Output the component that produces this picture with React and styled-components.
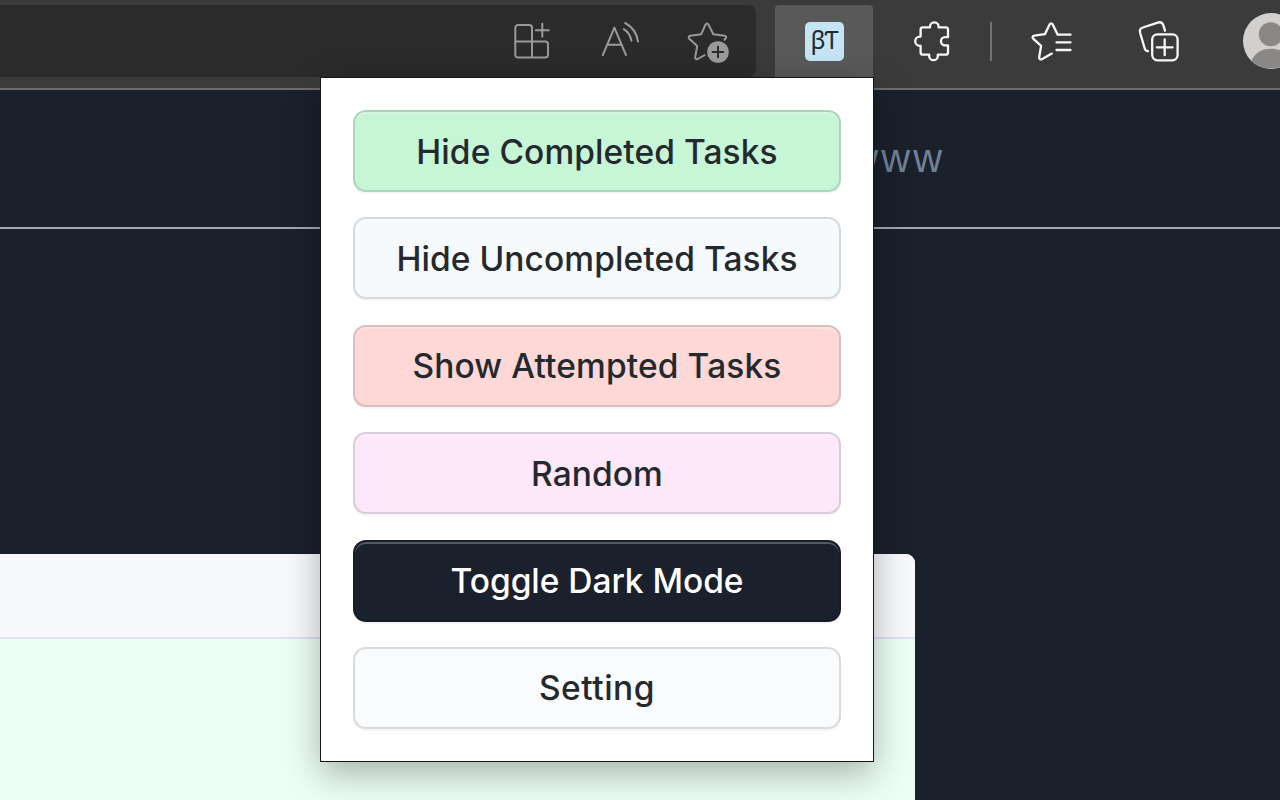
import React from 'react';
import styled, { createGlobalStyle } from 'styled-components';

const GlobalStyle = createGlobalStyle`
  * { box-sizing: border-box; }
  body { margin: 0; background: #1a202c; font-family: Inter, "Liberation Sans", sans-serif; }
`;

const Screen = styled.div`
  position: relative;
  width: 1280px;
  height: 800px;
  overflow: hidden;
  display: flex;
  flex-direction: column;
  background: #1a202c;
`;

const Toolbar = styled.div`
  flex: none;
  display: flex;
  align-items: flex-start;
  height: 90px;
  padding-top: 5px;
  background: #3b3b3b;
  border-bottom: 2px solid #6f6e6d;
`;

const AddressBar = styled.div`
  flex: none;
  display: flex;
  align-items: center;
  justify-content: flex-end;
  gap: 40px;
  width: 756px;
  height: 72px;
  padding-right: 25px;
  border-radius: 0 8px 8px 0;
  background: #2b2b2b;
`;

const ExtensionButton = styled.div`
  flex: none;
  display: flex;
  align-items: center;
  justify-content: center;
  width: 98px;
  height: 72px;
  margin-left: 19px;
  border-radius: 4px 4px 0 0;
  background: #595959;
`;

const ExtensionLogo = styled.div`
  display: flex;
  align-items: flex-start;
  justify-content: center;
  width: 39px;
  height: 39px;
  border-radius: 5px;
  background: #c5e4f4;
  color: #1f2930;
  font: 400 24.5px/36px "Noto Sans", sans-serif;
  letter-spacing: -1.1px;
`;

const Actions = styled.div`
  flex: none;
  display: flex;
  align-items: center;
  height: 72px;
  padding-left: 35px;
`;

const Divider = styled.div`
  width: 2px;
  height: 39px;
  margin: 0 37px 0 34px;
  background: #737373;
`;

const Icon = styled.svg`
  flex: none;
  display: block;
  width: 48px;
  height: 48px;
  fill: none;
  stroke: ${(p) => (p.$muted ? '#9a9a9a' : '#f8f8f8')};
  stroke-width: ${(p) => (p.$muted ? 2 : 2.3)};
  stroke-linecap: round;
  stroke-linejoin: round;
`;

const CollectionsIcon = styled(Icon)`
  margin-left: 59px;
`;

const Avatar = styled.svg`
  flex: none;
  width: 56px;
  height: 56px;
  margin-left: 59px;
`;

const PageHeader = styled.div`
  flex: none;
  display: flex;
  align-items: center;
  justify-content: flex-end;
  height: 139px;
  padding: 0 334.7px 2px 0;
  border-bottom: 2px solid #a0a6b4;
  color: #718096;
  font-family: "Liberation Sans", Arial, sans-serif;
  font-size: 40px;
  line-height: 48px;
  letter-spacing: 3.1px;
`;

const PageBody = styled.div`
  flex: 1;
  padding-top: 325px;
`;

const TaskTable = styled.div`
  width: 914.5px;
  height: 246px;
  border-top-right-radius: 9px;
  overflow: hidden;
  background: #edfff4;
`;

const TableHead = styled.div`
  height: 85px;
  background: #f7f9fc;
  border-bottom: 2px solid #e2e0f5;
`;

const Popup = styled.div`
  position: absolute;
  left: 320px;
  top: 77px;
  width: 554px;
  height: 685px;
  display: flex;
  flex-direction: column;
  gap: 25.4px;
  padding: 32px;
  background: #fff;
  border: 1px solid #161616;
  box-shadow: 0 12px 34px rgba(0, 0, 0, 0.3);
`;

const MenuButton = styled.button`
  flex: none;
  width: 488px;
  height: 82px;
  padding: 1px 0 0;
  border: 2px solid ${(p) => p.$edge || 'rgba(27, 31, 35, 0.15)'};
  border-radius: 13px;
  background: ${(p) => p.$fill};
  color: ${(p) => p.$ink || '#24292e'};
  box-shadow: 0 2px 0 rgba(27, 31, 35, 0.04),
    inset 0 2px 0 rgba(255, 255, 255, 0.25);
  font: 500 33.5px/48px Inter, sans-serif;
  letter-spacing: ${(p) => p.$track || '0.08px'};
`;

const buttons = [
  { label: 'Hide Completed Tasks', fill: '#c6f6d5' },
  { label: 'Hide Uncompleted Tasks', fill: '#f7fafc' },
  { label: 'Show Attempted Tasks', fill: '#fed7d7', track: '0.12px' },
  { label: 'Random', fill: '#fde8fa' },
  { label: 'Toggle Dark Mode', fill: '#1a202c', ink: '#fff', edge: '#171c26', track: '-0.04px' },
  { label: 'Setting', fill: '#fafbfc', track: '0.5px' },
];

export default function App() {
  return (
    <Screen>
      <GlobalStyle />
      <Toolbar>
        <AddressBar>
          <Icon $muted viewBox="507 17 48 48">
            <path d="M518 25h11.5a2.5 2.5 0 0 1 2.5 2.5v30h-14a2.7 2.7 0 0 1-2.7-2.7v-27a2.7 2.7 0 0 1 2.7-2.8zM515.3 41.4h30a2.7 2.7 0 0 1 2.7 2.7v10.7a2.7 2.7 0 0 1-2.7 2.7H532M542.3 23.8v13M535.8 30.3h13" />
          </Icon>
          <Icon $muted viewBox="595 17 48 48">
            <path d="M602.8 55.2l11.6-27.6L626 55.2M607 44.8h14.8M623.7 29.2c4 2.4 6.8 6.6 7.7 11.6M625.2 23c7.2 3.8 11.7 10.4 12.8 18.6" />
          </Icon>
          <Icon $muted viewBox="683 17 48 48">
            <path d="M724.4 39.8l1.2-1.2c1.1-1.2.6-2.7-1-2.9l-11.3-1.4-4.8-9.7c-.7-1.4-2.3-1.4-3 0l-4.4 9.7-10.7 1.4c-1.7.3-2.3 1.9-1.1 3l7.9 7.2-2 11.2c-.3 1.7 1.2 2.6 2.6 1.9l6.8-3.8" />
            <circle cx="718" cy="52" r="10.8" fill="#9a9a9a" stroke="none" />
            <path d="M718 46.7v10.6M712.7 52h10.6" stroke="#2b2b2b" />
          </Icon>
        </AddressBar>
        <ExtensionButton>
          <ExtensionLogo>βƬ</ExtensionLogo>
        </ExtensionButton>
        <Actions>
          <Icon viewBox="908 17 48 48">
            <path d="M922.8 27.4h7.2v-.7a4.3 4.3 0 0 1 8.6 0v.7h7.2a2.2 2.2 0 0 1 2.2 2.2v7.6h-3a4 4 0 0 0 0 8.1h3v7.2a2.2 2.2 0 0 1-2.2 2.2h-8v1.2a4.3 4.3 0 0 1-8.6 0v-1.2h-6.4a2.2 2.2 0 0 1-2.2-2.2v-6.7h-.8a4.6 4.6 0 0 1 0-9.2h.8v-7a2.2 2.2 0 0 1 2.2-2.2z" />
          </Icon>
          <Divider />
          <Icon viewBox="1029 17 48 48">
            <path d="M1070.5 34.7h-12.8l-5.1-10.4c-.7-1.3-2.2-1.3-2.9 0l-4.7 9.8-10.8 1.6c-1.7.3-2.2 1.9-1 3l7.9 7.2-1.9 11.4c-.3 1.6 1.2 2.6 2.6 1.9l10-5.6M1056.5 42.4h14M1056.5 50h14" />
          </Icon>
          <CollectionsIcon viewBox="1136 17 48 48">
            <path d="M1148 51.2c-1.8-.1-2.8-.9-3.2-2.4l-4.7-16c-.7-2.6.3-4.6 2.8-5.3l14.9-4.9c2.7-.8 4.7.1 5.6 2.7l1.6 5.4" />
            <rect x="1152.2" y="34.4" width="25.4" height="25.9" rx="5.2" />
            <path d="M1164.7 39.5v15.7M1156.8 47.3h15.8" />
          </CollectionsIcon>
          <Avatar viewBox="1243 13 56 56">
            <circle cx="1271" cy="41" r="28" fill="#d2d0ce" />
            <circle cx="1270.8" cy="34.2" r="12" fill="#8a8886" />
            <path d="M1251.5 61C1254 53 1262 48.7 1271 48.7S1288 53 1290.5 61C1280 71 1262 71 1251.5 61z" fill="#8a8886" />
          </Avatar>
        </Actions>
      </Toolbar>
      <PageHeader>www</PageHeader>
      <PageBody>
        <TaskTable>
          <TableHead />
        </TaskTable>
      </PageBody>
      <Popup>
        {buttons.map((b) => (
          <MenuButton key={b.label} $fill={b.fill} $ink={b.ink} $edge={b.edge} $track={b.track}>
            {b.label}
          </MenuButton>
        ))}
      </Popup>
    </Screen>
  );
}
